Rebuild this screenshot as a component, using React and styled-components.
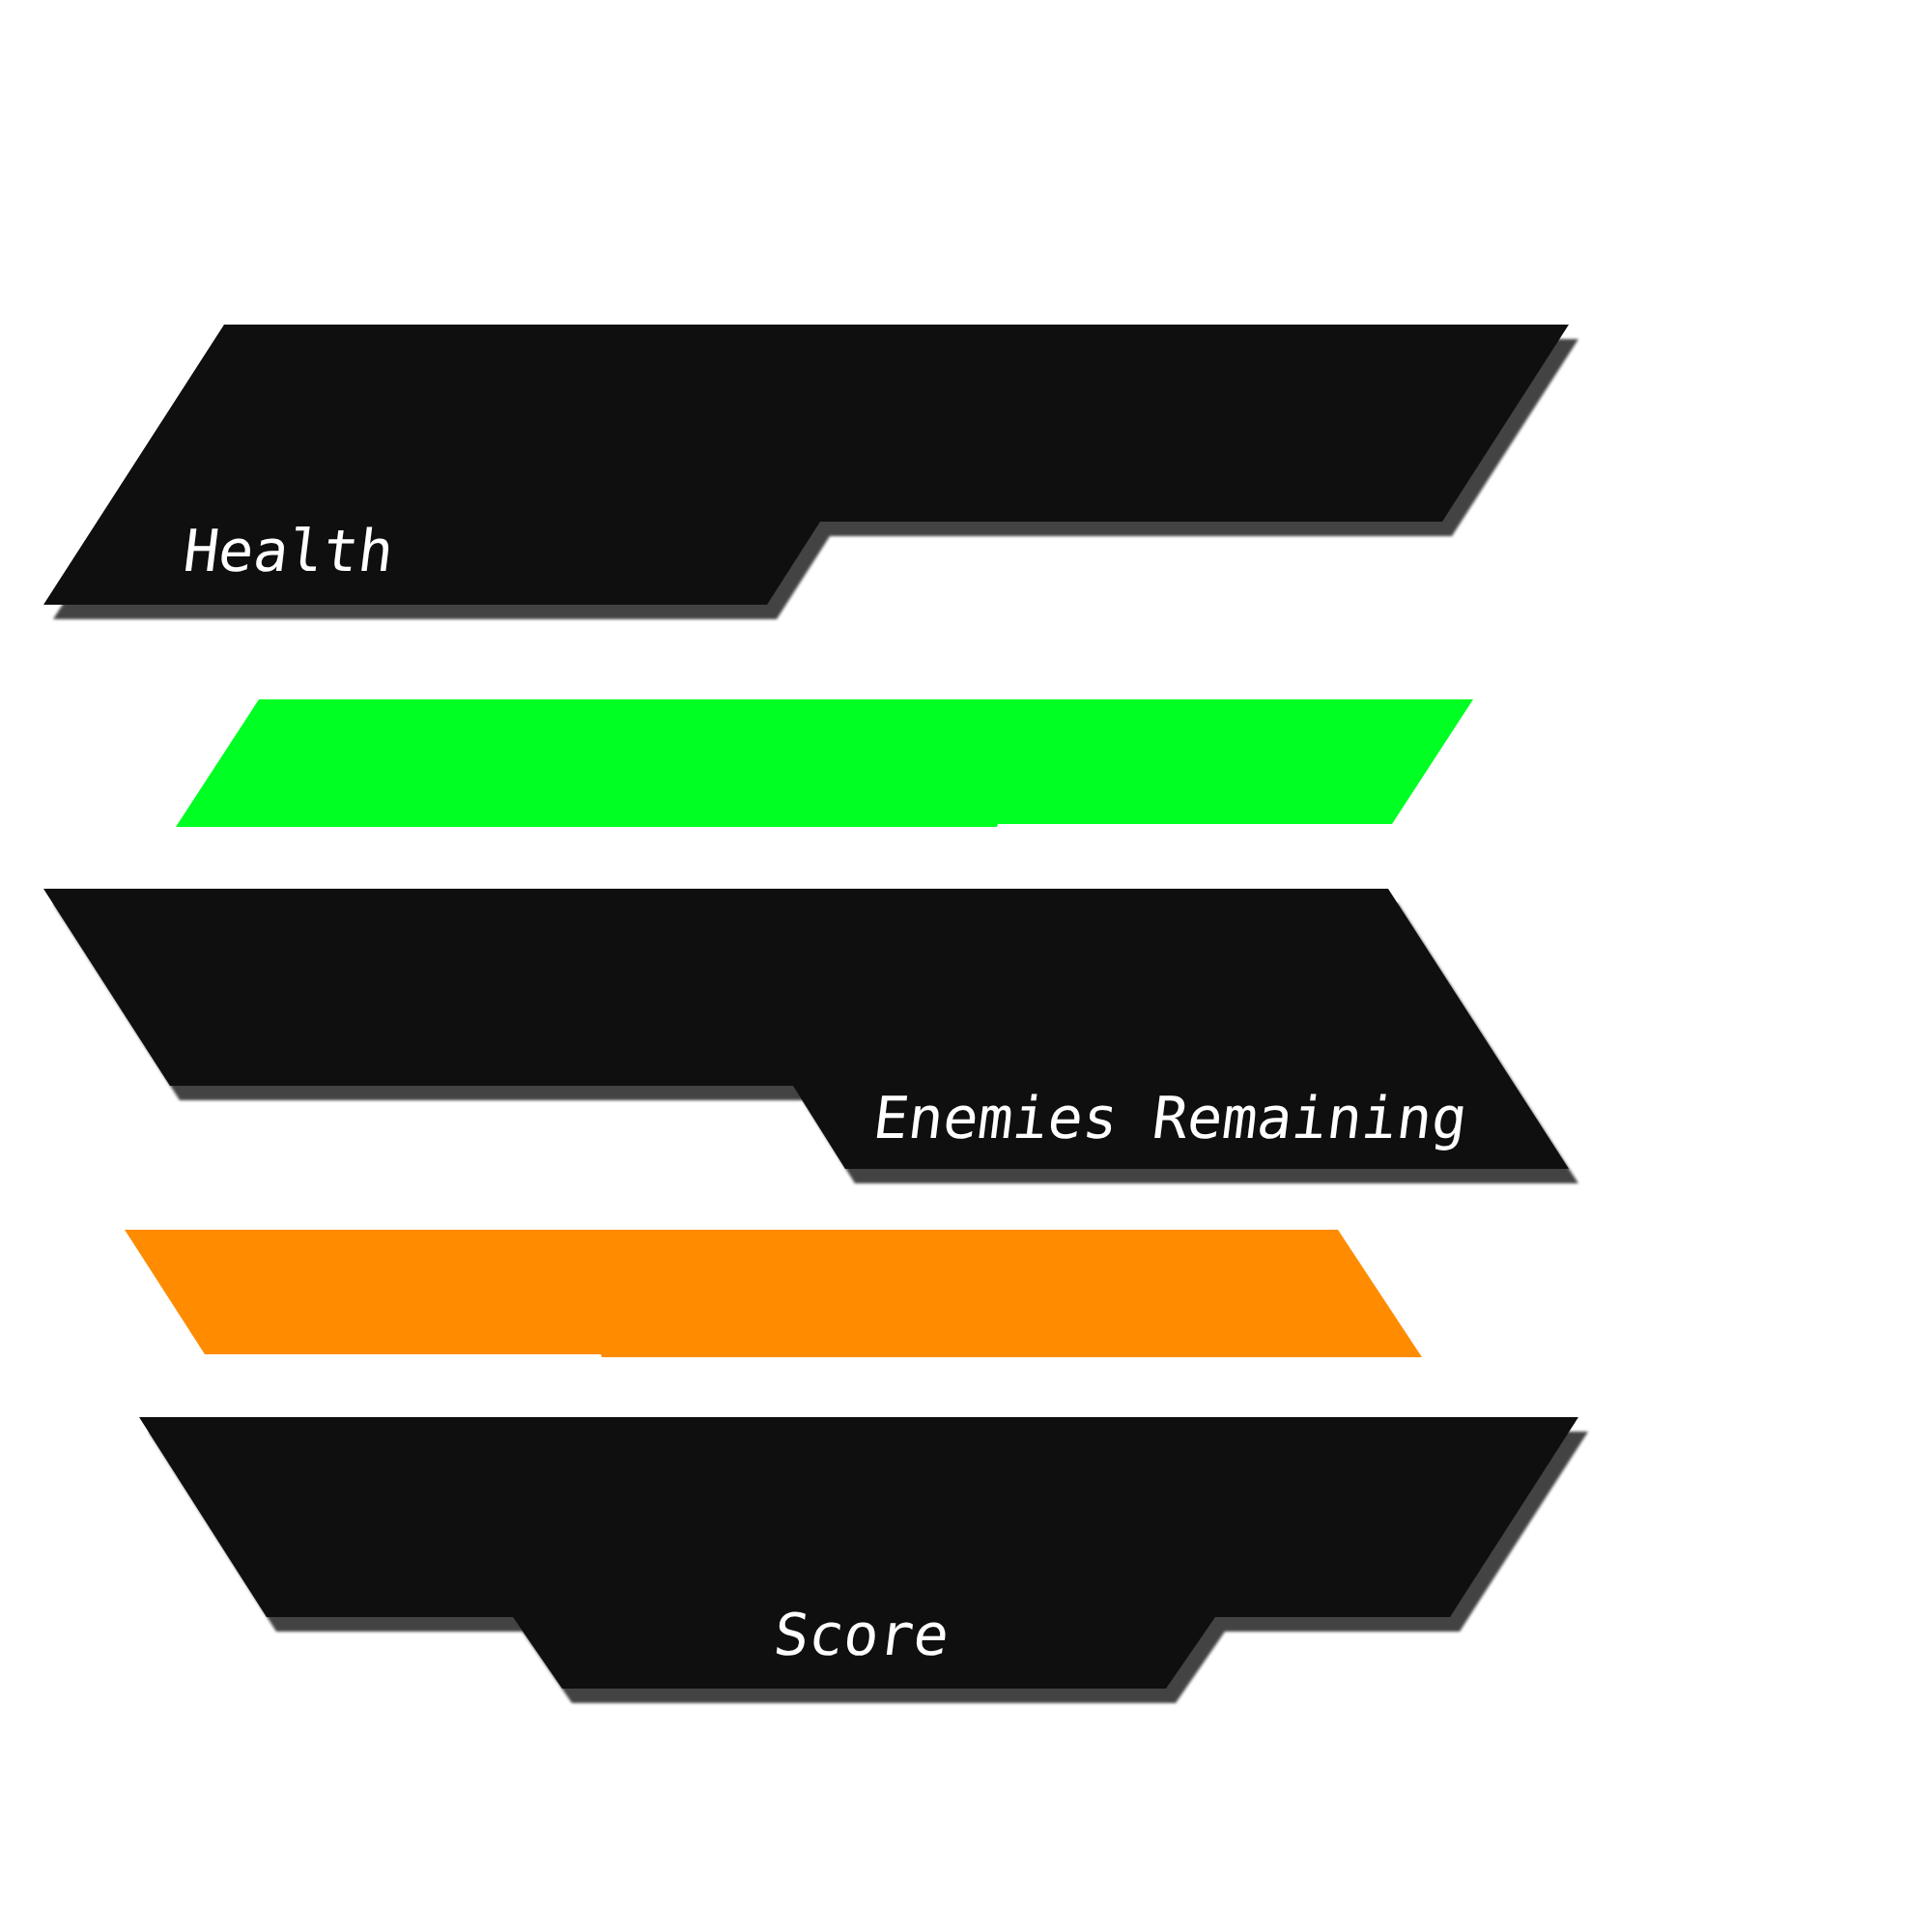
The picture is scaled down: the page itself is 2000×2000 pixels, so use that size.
import React from "react";
import styled, { createGlobalStyle } from "styled-components";

const GlobalStyle = createGlobalStyle`
  html, body {
    margin: 0;
    padding: 0;
    background: #ffffff;
  }
  body {
    font-family: "DejaVu Sans Mono", "Liberation Mono", monospace;
  }
`;

const Hud = styled.div`
  display: flex;
  flex-direction: column;
  align-items: flex-start;
  width: 2000px;
  min-height: 2000px;
  padding-top: 336px;
  box-sizing: border-box;
`;

// filter sits on a wrapper so the shadow follows the clipped outline
const Shadow = styled.div`
  margin-left: ${p => p.$left}px;
  margin-top: ${p => p.$top || 0}px;
  filter: drop-shadow(10px 15px 1.5px #434343);
`;

const Plate = styled.div`
  width: ${p => p.$w}px;
  height: ${p => p.$h}px;
  background: #0f0f0f;
  clip-path: polygon(${p => p.$shape});
  display: flex;
  align-items: flex-end;
  justify-content: ${p => p.$justify || "flex-start"};
  padding: 0 0 ${p => p.$pb}px ${p => p.$pl}px;
  box-sizing: border-box;
`;

const Label = styled.span`
  display: inline-block;
  font-family: "DejaVu Sans Mono", "Liberation Mono", monospace;
  font-size: 60px;
  line-height: 1;
  color: #ffffff;
  white-space: pre;
  transform: skewX(-7deg);
  transform-origin: 0 85%;
`;

const Bar = styled.div`
  margin-left: ${p => p.$left}px;
  margin-top: ${p => p.$top}px;
  width: 1343px;
  height: 132px;
  background: ${p => p.$color};
  clip-path: polygon(${p => p.$shape});
`;

const shapes = {
  health: "187px 0, 1579px 0, 1448px 204px, 804px 204px, 749px 290px, 0 290px",
  enemies: "0 0, 1392px 0, 1579px 290px, 830px 290px, 776px 204px, 131px 204px",
  score:
    "0 0, 1490px 0, 1357px 207px, 1114px 207px, 1063px 281px, 438px 281px, 387px 207px, 132px 207px",
  health_bar: "86px 0, 1343px 0, 1259px 129px, 851px 129px, 850px 132px, 0 132px",
  enemy_bar: "0 0, 1256px 0, 1343px 132px, 494px 132px, 493px 129px, 83px 129px"
};

export default function App() {
  return (
    <>
      <GlobalStyle />
      <Hud>
        <Shadow $left={45}>
          <Plate $w={1579} $h={290} $shape={shapes.health} $pl={143} $pb={26}>
            <Label>Health</Label>
          </Plate>
        </Shadow>

        <Bar $left={182} $top={98} $color="#00ff22" $shape={shapes.health_bar} />

        <Shadow $left={45} $top={64}>
          <Plate $w={1579} $h={290} $shape={shapes.enemies} $pl={857} $pb={23}>
            <Label>Enemies Remaining</Label>
          </Plate>
        </Shadow>

        <Bar $left={129} $top={63} $color="#ff8c00" $shape={shapes.enemy_bar} />

        <Shadow $left={144} $top={62}>
          <Plate
            $w={1490}
            $h={281}
            $shape={shapes.score}
            $justify="center"
            $pl={1}
            $pb={26}
          >
            <Label>Score</Label>
          </Plate>
        </Shadow>
      </Hud>
    </>
  );
}
